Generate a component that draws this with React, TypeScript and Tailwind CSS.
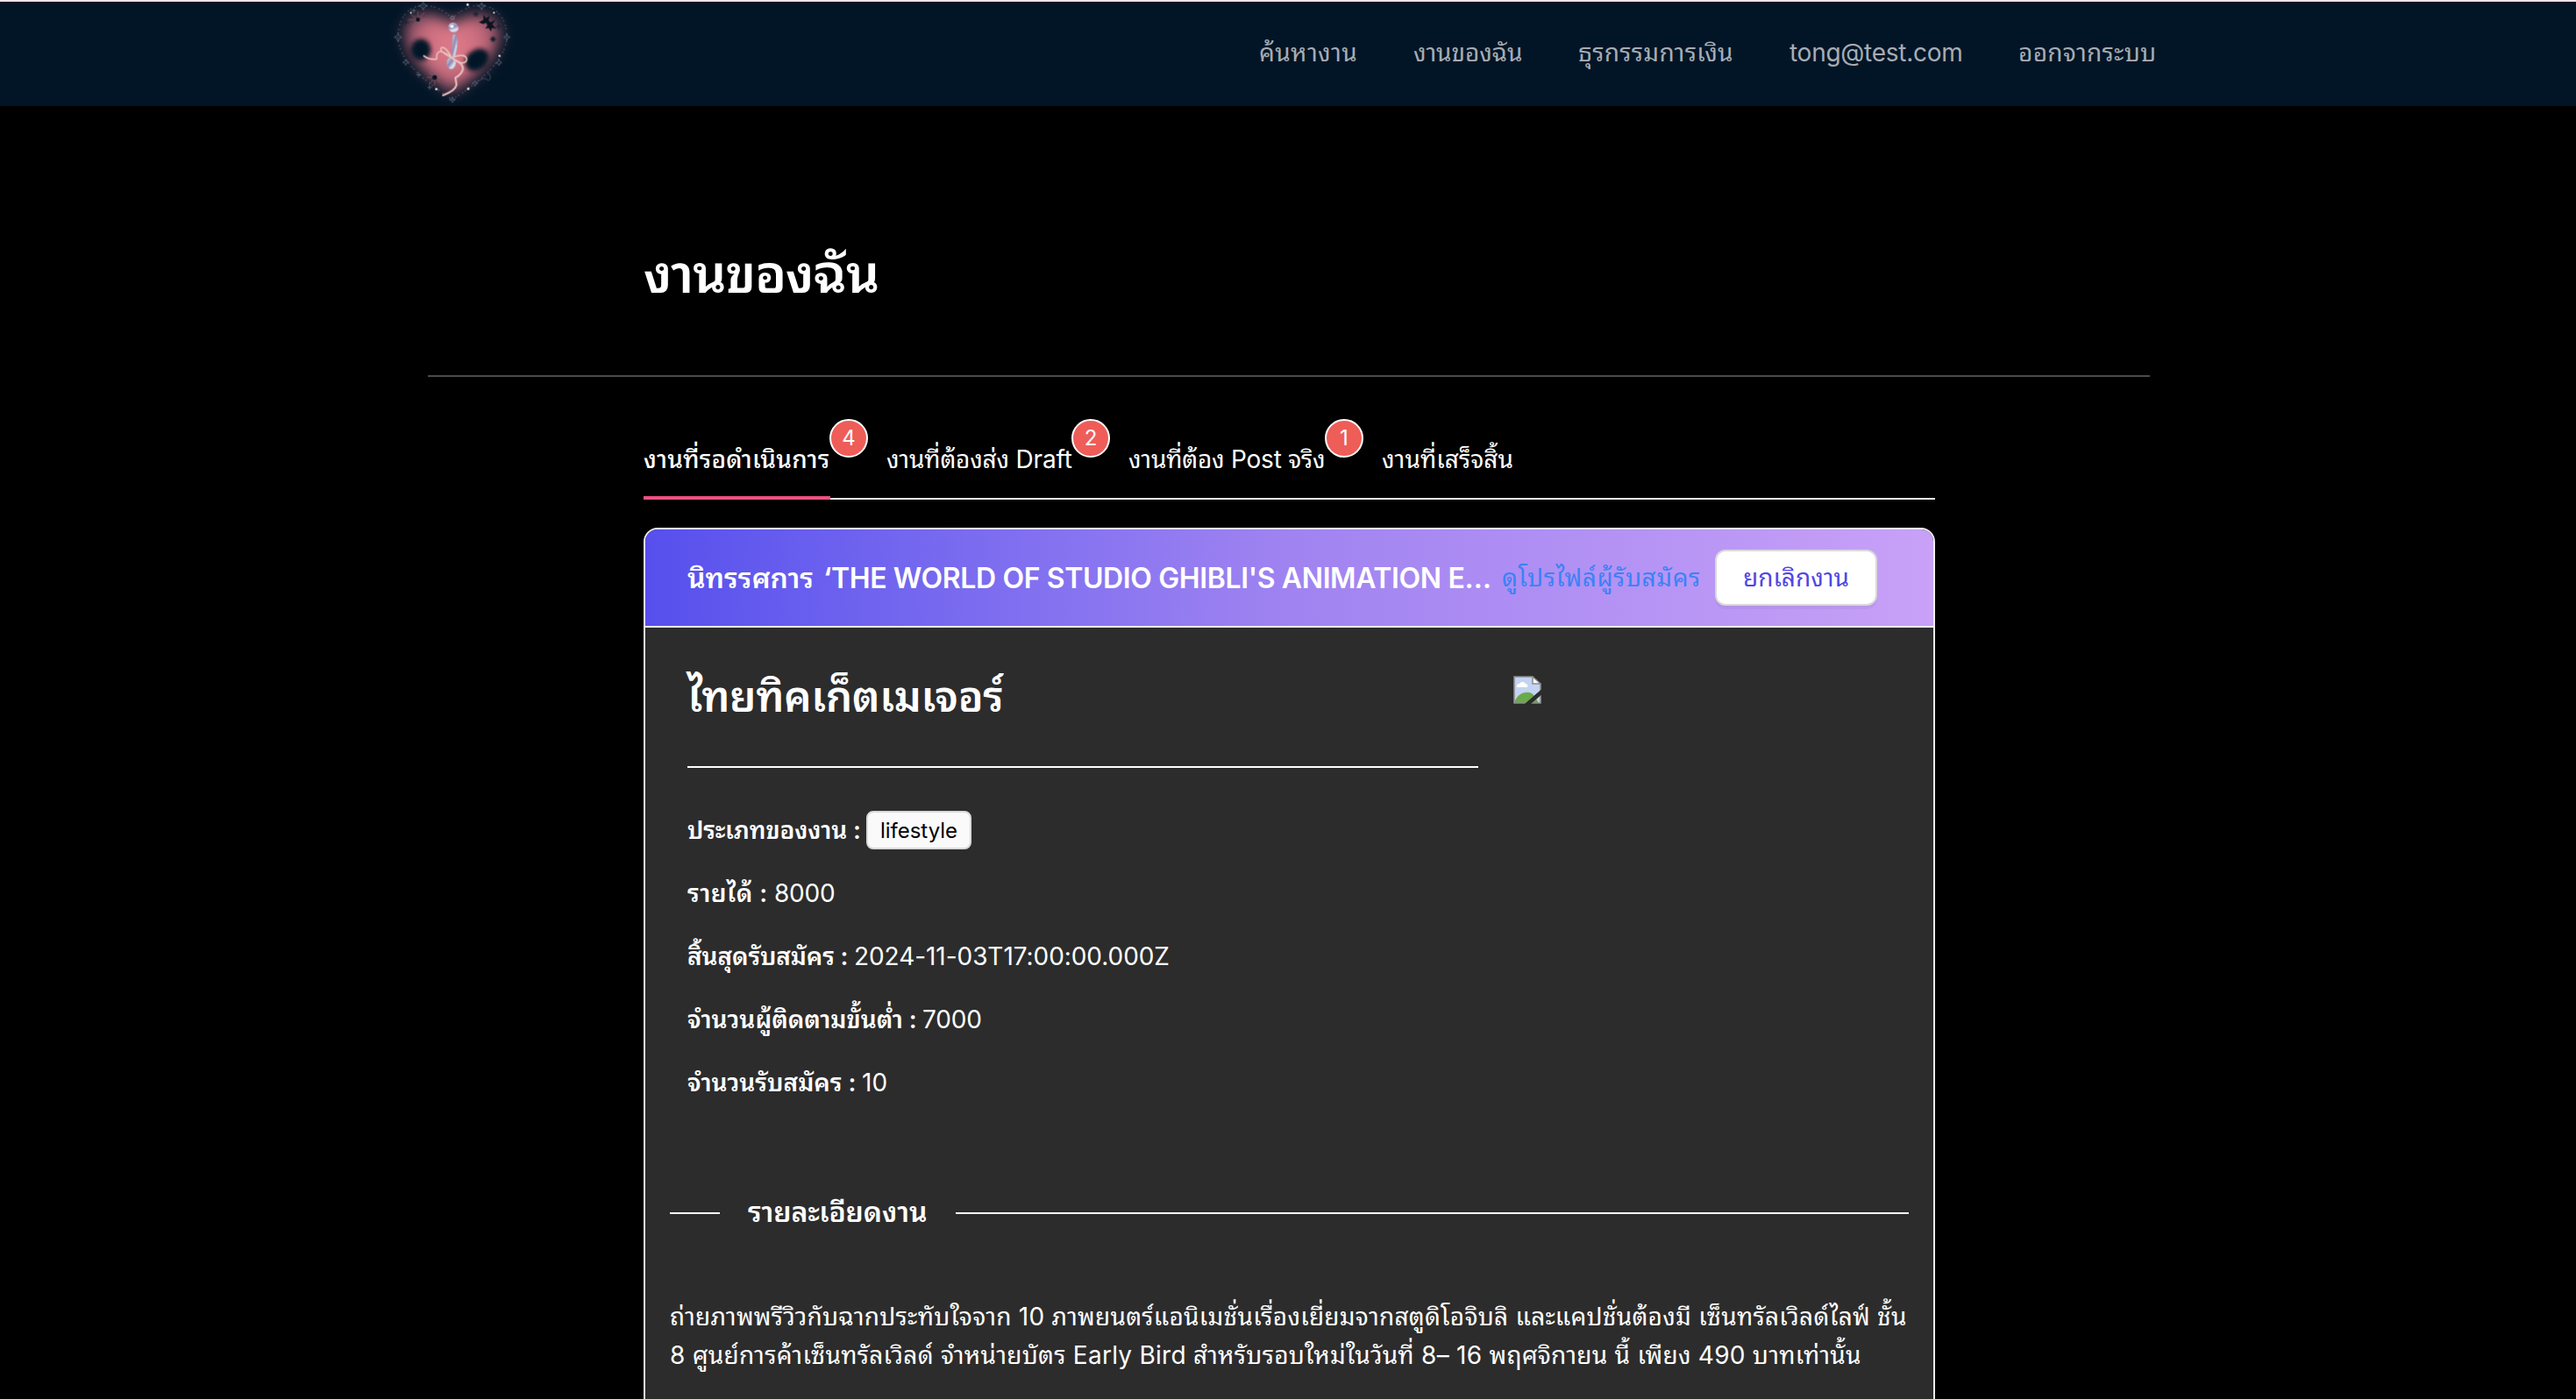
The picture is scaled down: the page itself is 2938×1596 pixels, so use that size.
const tabs = [
  { label: 'งานที่รอดำเนินการ', count: 4, active: true, cls: 'tracking-[0.2px]', box: 'w-[213px]' },
  { label: 'งานที่ต้องส่ง Draft', count: 2, active: false, cls: 'tracking-[-0.18px]', box: 'w-[212px]' },
  { label: 'งานที่ต้อง Post จริง', count: 1, active: false, cls: 'tracking-[-0.22px]', box: 'w-[225px]' },
  { label: 'งานที่เสร็จสิ้น', count: 0, active: false, cls: 'tracking-[0.05px]', box: 'w-[151px]' },
];

const fields = [
  { label: 'รายได้ :', value: '8000', labelClass: 'w-[99px] tracking-[0.5px]', valueClass: 'tracking-[-0.2px]' },
  { label: 'สิ้นสุดรับสมัคร :', value: '2024-11-03T17:00:00.000Z', labelClass: 'w-[190px] tracking-[-0.14px]', valueClass: 'tracking-[-0.06px]' },
  { label: 'จำนวนผู้ติดตามขั้นต่ำ :', value: '7000', labelClass: 'w-[268px] tracking-[0.02px]', valueClass: 'tracking-[-0.2px]' },
  { label: 'จำนวนรับสมัคร :', value: '10', labelClass: 'w-[199px]', valueClass: '' },
];

function Logo() {
  return (
    <svg viewBox="0 6 450 357" className="h-[119px] w-[150px] shrink-0">
      <defs>
        <filter id="soft" x="-30%" y="-30%" width="160%" height="160%">
          <feGaussianBlur stdDeviation="24" />
        </filter>
        <filter id="blob" x="-40%" y="-40%" width="180%" height="180%">
          <feGaussianBlur stdDeviation="8" />
        </filter>
        <radialGradient id="glow" gradientUnits="userSpaceOnUse" cx="228" cy="155" r="185">
          <stop offset="0" stopColor="#e27c8b" />
          <stop offset="0.5" stopColor="#cc6e7f" />
          <stop offset="1" stopColor="#7a475c" />
        </radialGradient>
        <linearGradient id="pearl" x1="0" y1="0" x2="1" y2="1">
          <stop offset="0" stopColor="#dfe9e6" />
          <stop offset="0.45" stopColor="#8f86b4" />
          <stop offset="0.7" stopColor="#e8e4f4" />
          <stop offset="1" stopColor="#7d9d95" />
        </linearGradient>
      </defs>
      <path d="M228 318C150 264 62 190 64 108C70 40 160 30 228 82C296 30 386 40 392 108C394 190 306 264 228 318Z" fill="url(#glow)" filter="url(#soft)" />
      <g fill="#031325" filter="url(#blob)">
        <ellipse cx="120" cy="170" rx="34" ry="37" />
        <ellipse cx="312" cy="205" rx="44" ry="34" transform="rotate(-38 312 205)" />
      </g>
      <path d="M228 340C120 270 24 190 44 100C60 10 150-10 228 62C300-10 396 10 412 100C430 190 336 270 228 340Z" fill="none" stroke="#5a6780" strokeWidth="4.5" strokeLinecap="round" strokeDasharray="0 11 0 17" />
      <g fill="none" stroke="#6f7c92" strokeWidth="2">
        <path d="M128 6l4 9 10 5-10 4-4 10-4-10-10-4 10-5zM328 8l4 9 9 3-9 4-4 9-4-9-9-4 9-3zM42 114l4 9 9 4-9 5-4 10-4-10-9-5 9-4zM414 116l3 7 8 4-8 4-3 8-3-8-8-4 8-4zM68 203l3 7 7 3-7 3-3 7-3-7-7-3 7-3zM387 204l3 7 7 3-7 3-3 7-3-7-7-3 7-3zM228 331l3 7 7 3-7 3-3 7-3-7-7-3 7-3zM305 276l3 6 7 3-7 3-3 7-3-7-7-3 7-3z" />
        <path d="M112 247v18M103 256h18M96 28v16M88 36h16M150 291v16M142 299h16" />
      </g>
      <g fill="#fff">
        <circle cx="280" cy="16" r="4" /><circle cx="86" cy="43" r="3" /><circle cx="370" cy="43" r="3" />
        <circle cx="389" cy="191" r="3.5" /><circle cx="173" cy="305" r="4" /><circle cx="282" cy="304" r="4" />
      </g>
      <path d="M77 67h66M110 38v55M84 48l52 38M90 92l42-50M140 265h54M167 236v58M147 246l42 38M150 288l34-46" stroke="#8f6675" strokeWidth="1.8" />
      <g fill="#0b1220">
        <circle cx="110" cy="67" r="7" /><circle cx="167" cy="265" r="8" /><circle cx="367" cy="134" r="6" />
        <path d="M318 76L334 68L334 50L343 62L355 54L352 70L358 76L374 68L365 84L378 98L363 96L360 108L352 96L340 98L348 87L343 78L333 82Z" />
      </g>
      <path d="M308 38v20M298 48h20M301 41l14 14M315 41l-14 14M367 122v24M355 134h24M359 126l16 16M375 126l-16 16M386 80v22M376 91h20M68 70v14M60 77h18" stroke="#1b2433" strokeWidth="3" />
      <path d="M322 274q14-10 24-2t12-8q0-12-12-14M322 274l-16 10" fill="none" stroke="#4c5a70" strokeWidth="2.5" />
      <circle cx="228" cy="61" r="6" fill="none" stroke="#b9a3b4" strokeWidth="2" />
      <ellipse cx="231" cy="94" rx="18" ry="16" fill="url(#pearl)" transform="rotate(25 231 94)" />
      <ellipse cx="226" cy="90" rx="7" ry="5" fill="#f7fbfb" />
      <path d="M229 120q7-6 14 0q6 40-6 74q-6 6-10 0q-3-6 2-74z" fill="url(#pearl)" stroke="#8a8fa6" strokeWidth="1.5" />
      <ellipse cx="224" cy="216" rx="16" ry="21" fill="url(#pearl)" stroke="#8fa3a0" strokeWidth="1.5" />
      <g fill="none" stroke="#e9c0bd" strokeLinecap="round" strokeLinejoin="round">
        <path d="M130 191q16 14 44 11q-2-24 12-26q22 4 40 22M226 198q-20-38-34-36q-16 10 34 36M226 198q40-18 50 0q4 20-22 16q-18-4-28-16" strokeWidth="5" />
        <path d="M232 202q34 16 32 34q-4 18-26 30q2 12 4 24q-4 20-46 36" strokeWidth="6.5" />
      </g>
    </svg>
  );
}

function BrokenImage() {
  return (
    <svg viewBox="0 0 32 32" className="size-8">
      <path d="M1 1H22L31 10V17L14 31H1Z" fill="#c3d3f2" />
      <path d="M1 31C5 17 20 16 24 23L14 31Z" fill="#6aaa4b" />
      <path d="M31 22V31H21Z" fill="#c3d3f2" />
      <path d="M21 31L26 26L29 31Z" fill="#6aaa4b" />
      <path d="M4 13a3 3 0 0 1 3-4a4 4 0 0 1 7 0a3 3 0 0 1 2 4z" fill="#fff" />
      <path d="M22 1V9H31Z" fill="#fff" stroke="#8c8c8c" strokeWidth="1.5" />
      <path d="M31 17V9M22 1H1V31H14M20 31H31V22" fill="none" stroke="#8c8c8c" strokeWidth="1.6" />
      <path d="M13 32L32 15.500V21.500L20 32Z" fill="#2c2c2c" />
    </svg>
  );
}

export default function App() {
  return (
    <div className="h-[1596px] w-[2938px] overflow-hidden bg-black font-['Inter','Noto_Sans_Thai_Looped','Noto_Sans',sans-serif] text-[28px] leading-[44px] text-white">
      <header className="flex h-[121px] items-center border-t-2 border-[#efe3e6] bg-[#021526] pl-[440px]">
        <Logo />
        <nav className="flex gap-16 pb-[3px] pl-[846px] whitespace-nowrap text-[#a6adb4]">
          <a className="w-[112px] tracking-[0.4px]">ค้นหางาน</a>
          <a className="w-[124px] tracking-[-0.1px]">งานของฉัน</a>
          <a className="w-[177px] tracking-[0.32px]">ธุรกรรมการเงิน</a>
          <a className="w-[197px] tracking-[-0.27px]">tong@test.com</a>
          <a className="w-[157px] tracking-[0.3px]">ออกจากระบบ</a>
        </nav>
      </header>

      <main className="ml-[488px] w-[1964px]">
        <div className="flex h-[309px] items-center border-b-2 border-[#4a4a4a] pt-[74px] pl-[246px]">
          <h1 className="text-[60px] leading-[76px] font-semibold tracking-[-1.2px]">งานของฉัน</h1>
        </div>

        <div className="ml-[246px] w-[1473px]">
          <div className="flex h-[140px] items-end gap-16 border-b-2 border-[#f0f0f0] whitespace-nowrap">
            {tabs.map((tab) => (
              <div
                key={tab.label}
                className={`relative -mb-[2px] h-[70px] pt-0.5 ${tab.box} ${tab.active ? 'border-b-4 border-[#eb5182] font-medium' : ''}`}
              >
                <span className={tab.cls}>{tab.label}</span>
                {tab.count > 0 && (
                  <span className="absolute -top-[22px] -right-[43px] flex size-11 items-center justify-center rounded-full border-2 border-white bg-[#ee5d58] text-2xl font-normal">
                    {tab.count}
                  </span>
                )}
              </div>
            ))}
          </div>

          <section className="mt-8 h-[1040px] overflow-hidden rounded-t-2xl border-2 border-[#f0f0f0] bg-[#2c2c2c]">
            <div className="flex h-28 items-center border-b-2 border-[#f0f0f0] bg-linear-to-r from-[#574fed] via-[#a083f1] to-[#c8a1f7] pl-12 whitespace-nowrap">
              <h2 className="flex w-[929px] gap-[11px] pt-0.5 text-[32px] font-semibold">
                <span>นิทรรศการ</span>
                <span className="tracking-[-0.38px]">‘THE WORLD OF STUDIO GHIBLI'S ANIMATION E…</span>
              </h2>
              <a className="w-[227px] tracking-[0.6px] text-[#3b82f6]">ดูโปรไฟล์ผู้รับสมัคร</a>
              <button className="ml-4 flex h-16 w-[185px] items-center justify-center rounded-xl border-2 border-[#d9d9d9] bg-white text-[#4f46e5] shadow-[0_4px_0_rgba(0,0,0,0.04)]">
                ยกเลิกงาน
              </button>
            </div>

            <div className="flex pl-12">
              <div className="w-[902px]">
                <div className="flex h-40 items-center border-b-2 border-white">
                  <h3 className="text-5xl leading-[60px] font-semibold tracking-[-0.4px]">ไทยทิคเก็ตเมเจอร์</h3>
                </div>
                <div className="mt-[49px] flex flex-col gap-7">
                  <div className="flex h-11 items-center">
                    <span className="w-[204px] shrink-0 font-semibold tracking-[-0.15px]">ประเภทของงาน :</span>
                    <span className="flex h-11 w-[120px] items-center justify-center rounded-lg border-2 border-[#d9d9d9] bg-[#fafafa] pt-0.5 text-2xl text-black">
                      lifestyle
                    </span>
                  </div>
                  {fields.map((field) => (
                    <div key={field.label} className="flex h-11 items-center whitespace-nowrap">
                      <span className={`shrink-0 font-semibold ${field.labelClass}`}>{field.label}</span>
                      <span className={field.valueClass}>{field.value}</span>
                    </div>
                  ))}
                </div>
              </div>
              <div className="pt-[55px] pl-10">
                <BrokenImage />
              </div>
            </div>

            <div className="mt-[102px] flex h-[50px] items-center px-7 whitespace-nowrap">
              <div className="h-0.5 w-[57px] bg-white" />
              <h4 className="ml-8 w-[237px] shrink-0 pb-[3px] text-[32px] font-semibold tracking-[-0.1px]">รายละเอียดงาน</h4>
              <div className="h-0.5 grow bg-white" />
            </div>

            <p className="mt-[71px] pl-7 whitespace-nowrap">
              <span className="block tracking-[0.26px]">
                ถ่ายภาพพรีวิวกับฉากประทับใจจาก 10 ภาพยนตร์แอนิเมชั่นเรื่องเยี่ยมจากสตูดิโอจิบลิ และแคปชั่นต้องมี เซ็นทรัลเวิลด์ไลฟ์ ชั้น
              </span>
              <span className="block tracking-[0.26px]">
                8 ศูนย์การค้าเซ็นทรัลเวิลด์ จำหน่ายบัตร Early Bird สำหรับรอบใหม่ในวันที่ 8– 16 พฤศจิกายน นี้ เพียง 490 บาทเท่านั้น
              </span>
            </p>
          </section>
        </div>
      </main>
    </div>
  );
}
